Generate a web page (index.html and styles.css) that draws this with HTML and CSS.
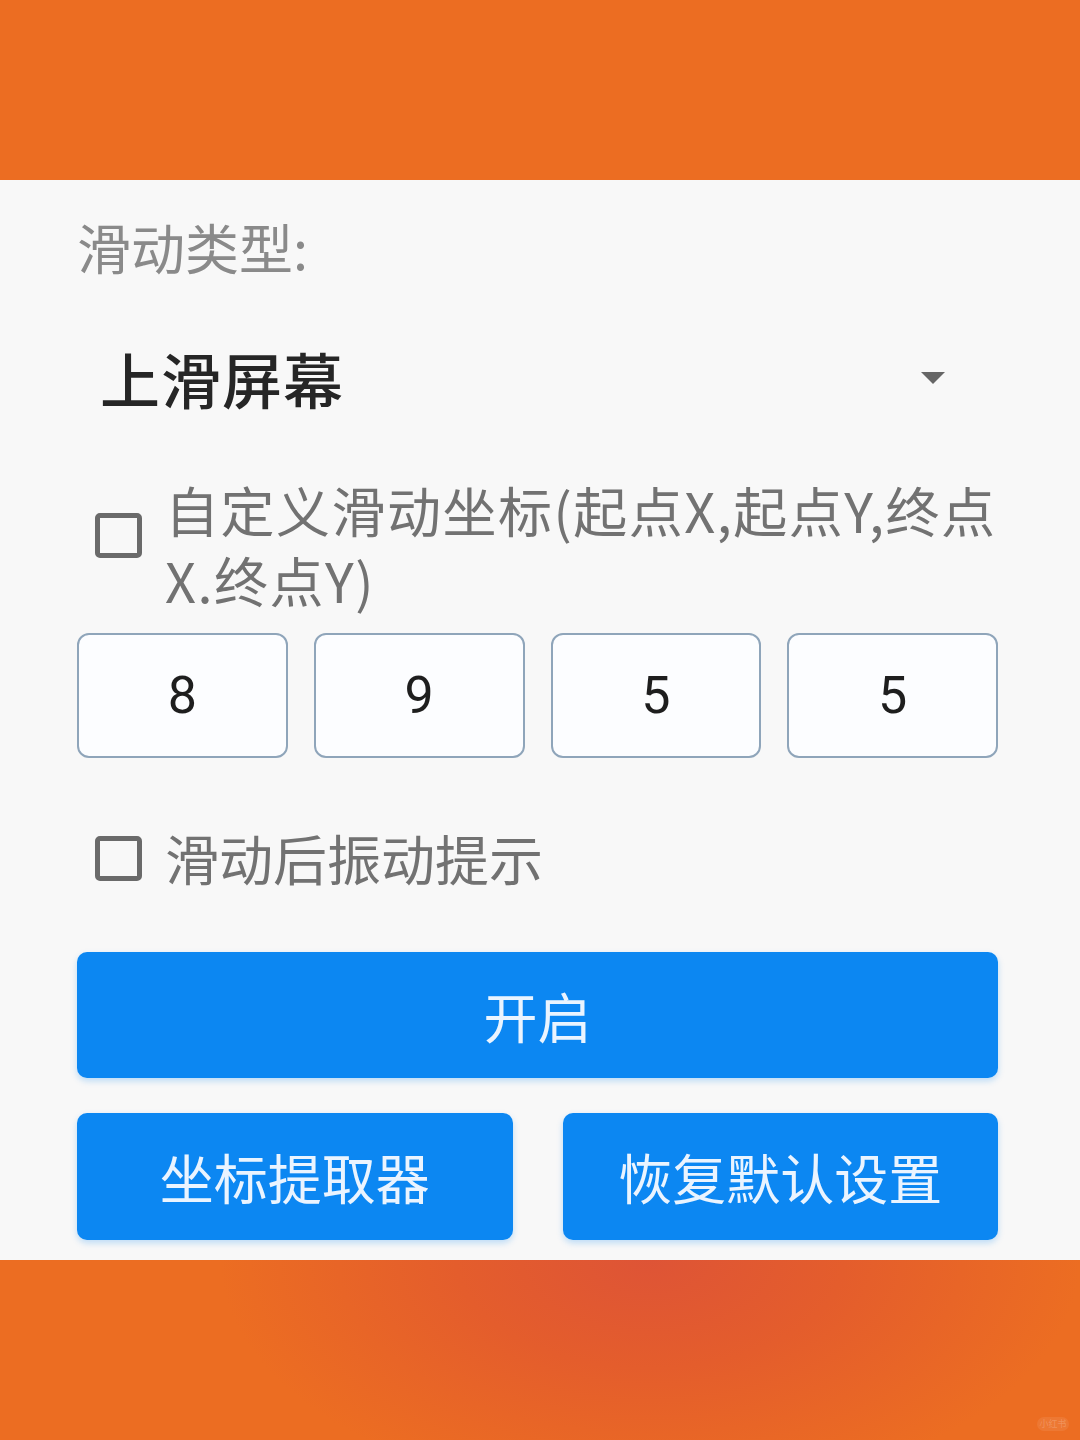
FILE: index.html
```html
<!DOCTYPE html>
<html lang="zh-CN">
<head>
<meta charset="utf-8">
<title>滑动设置</title>
<link rel="stylesheet" href="styles.css">
</head>
<body>
<div class="band band-top"></div>
<main class="panel">
  <div class="label">滑动类型:</div>
  <div class="dropdown">
    <span class="dropdown-value">上滑屏幕</span>
    <svg class="dropdown-arrow" width="26" height="14" viewBox="0 0 26 14"><path d="M1 1 L25 1 L13 13 Z" fill="#666"/></svg>
  </div>
  <div class="check-row check-row-top">
    <span class="checkbox"></span>
    <span class="check-text check-text-wrap">自定义滑动坐标(起点X,起点Y,终点<br>X.终点Y)</span>
  </div>
  <div class="inputs">
    <div class="input">8</div>
    <div class="input">9</div>
    <div class="input">5</div>
    <div class="input">5</div>
  </div>
  <div class="check-row check-row-mid">
    <span class="checkbox"></span>
    <span class="check-text">滑动后振动提示</span>
  </div>
  <button class="btn btn-full">开启</button>
  <div class="btn-row">
    <button class="btn">坐标提取器</button>
    <button class="btn">恢复默认设置</button>
  </div>
</main>
<div class="band band-bottom">
  <span class="watermark">小红书</span>
</div>
</body>
</html>
```

FILE: styles.css
```css
* { box-sizing: border-box; }
html, body { margin: 0; padding: 0; }
body {
  width: 1080px;
  height: 1440px;
  overflow: hidden;
  font-family: "Noto Sans CJK SC", "Noto Sans", sans-serif;
  background: #ec6d22;
}
.band { height: 180px; background: #ec6d22; }
.band-bottom {
  position: relative;
  background: radial-gradient(ellipse 430px 240px at 650px 0px, #de5436 0%, #e45d2c 45%, #ec6d22 100%);
}
.watermark {
  position: absolute;
  left: 1037px;
  top: 157px;
  width: 32px;
  height: 14px;
  border-radius: 7px;
  background: rgba(255,255,255,0.08);
  color: rgba(255,255,255,0.2);
  font-size: 9px;
  line-height: 14px;
  text-align: center;
}
.panel {
  height: 1080px;
  background: #f8f8f8;
  padding: 40px 82px 0 77px;
  display: flex;
  flex-direction: column;
}
.label {
  font-size: 54px;
  line-height: 54px;
  color: #8a8a8a;
}
.dropdown {
  margin-top: 51px;
  height: 105px;
  display: flex;
  align-items: center;
  justify-content: space-between;
  padding: 0 52px 0 23px;
}
.dropdown-value {
  font-size: 60px;
  line-height: 60px;
  color: #262626;
  font-weight: 500;
  letter-spacing: 1px;
}
.dropdown-arrow { display: block; }
.check-row {
  display: flex;
  padding-left: 18px;
  gap: 23px;
}
.check-row-top { margin-top: 45px; align-items: flex-start; }
.check-row-top .checkbox { margin-top: 38px; }
.check-row-mid { margin-top: 65px; align-items: center; }
.checkbox {
  flex: 0 0 auto;
  width: 47px;
  height: 45px;
  border: 5px solid #6a6a6a;
  border-radius: 5px;
}
.check-text {
  font-size: 54px;
  line-height: 70px;
  color: #727272;
}
.check-text-wrap { letter-spacing: 1.5px; }
.inputs {
  margin-top: 18px;
  display: grid;
  grid-template-columns: repeat(4, 1fr);
  gap: 26px;
}
.input {
  height: 125px;
  border: 2px solid #8fa5ba;
  border-radius: 12px;
  background: #fcfdff;
  display: flex;
  align-items: center;
  justify-content: center;
  font-family: Roboto, "Noto Sans", sans-serif;
  font-size: 52px;
  color: #1e1e1e;
}
.btn {
  border: none;
  border-radius: 10px;
  background: #0c87f2;
  color: #eaf4ff;
  font-family: "Noto Sans CJK SC", "Noto Sans", sans-serif;
  font-size: 54px;
  height: 127px;
  padding: 0;
  box-shadow: 0 3px 6px rgba(12,135,242,0.25);
}
.btn-full { margin-top: 59px; width: 100%; height: 126px; }
.btn-row {
  margin-top: 35px;
  display: grid;
  grid-template-columns: 1fr 1fr;
  gap: 50px;
}
```
